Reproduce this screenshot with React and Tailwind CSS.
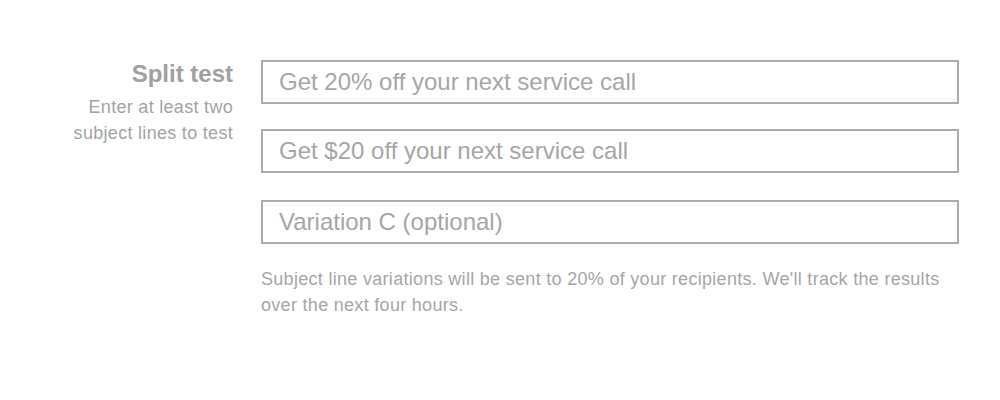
export default function App() {
  return (
    <div className="w-[1000px] h-[400px] bg-white font-['Liberation_Sans',Arial,sans-serif] text-[#a3a3a3]">
      <div className="flex pt-[60px]">
        <div className="w-[233px] shrink-0 text-right">
          <div className="text-[24px] leading-[28px] font-bold text-[#a0a0a0]">Split test</div>
          <div className="text-[18px] leading-[26px] mt-[6px] tracking-[0.3px]">
            Enter at least two
            <br />
            subject lines to test
          </div>
        </div>
        <div className="ml-[28px] w-[698px] flex flex-col">
          <div className="h-[44px] border-2 border-[#ababab] pl-[16px] flex items-center text-[24px] text-[#a6a6a6]">
            Get 20% off your next service call
          </div>
          <div className="mt-[25px] h-[44px] border-2 border-[#ababab] pl-[16px] flex items-center text-[24px] text-[#a6a6a6]">
            Get $20 off your next service call
          </div>
          <div className="mt-[27px] h-[44px] border-2 border-[#ababab] pl-[16px] flex items-center text-[24px] text-[#a6a6a6]">
            Variation C (optional)
          </div>
          <p className="mt-[22px] text-[18px] leading-[26px] tracking-[0.3px] text-[#a6a6a6]">
            Subject line variations will be sent to 20% of your recipients. We'll track the results over the next four hours.
          </p>
        </div>
      </div>
    </div>
  );
}
